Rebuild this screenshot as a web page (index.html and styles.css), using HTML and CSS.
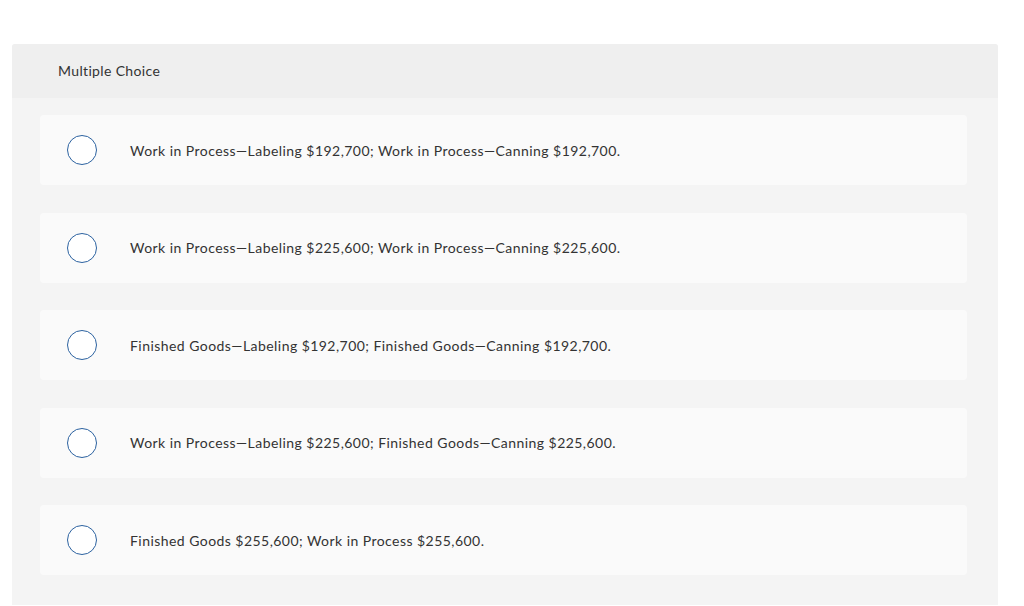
FILE: index.html
```html
<!DOCTYPE html>
<html>
<head>
<meta charset="utf-8">
<link rel="stylesheet" href="styles.css">
</head>
<body>
<div class="page">
  <section class="question">
    <header class="q-head">Multiple Choice</header>
    <div class="q-body">
      <label class="option"><span class="radio"></span><span class="opt-text">Work in Process—Labeling $192,700; Work in Process—Canning $192,700.</span></label>
      <label class="option"><span class="radio"></span><span class="opt-text">Work in Process—Labeling $225,600; Work in Process—Canning $225,600.</span></label>
      <label class="option"><span class="radio"></span><span class="opt-text">Finished Goods—Labeling $192,700; Finished Goods—Canning $192,700.</span></label>
      <label class="option"><span class="radio"></span><span class="opt-text">Work in Process—Labeling $225,600; Finished Goods—Canning $225,600.</span></label>
      <label class="option"><span class="radio"></span><span class="opt-text">Finished Goods $255,600; Work in Process $255,600.</span></label>
    </div>
  </section>
</div>
</body>
</html>
```
FILE: styles.css
```css
html, body {
  margin: 0;
  padding: 0;
  background: #ffffff;
}
body {
  font-family: "Lato", "Noto Sans", sans-serif;
  color: #333333;
}
.page {
  padding: 44px 26px 0 12px;
}
.question {
  width: 986px;
  background: #f4f4f4;
  border-radius: 3px 3px 0 0;
  overflow: hidden;
}
.q-head {
  height: 54px;
  background: #efefef;
  display: flex;
  align-items: center;
  padding: 0 0 2px 46px;
  box-sizing: border-box;
  font-size: 14px;
  letter-spacing: 0.35px;
  color: #333333;
}
.q-body {
  display: flex;
  flex-direction: column;
  gap: 27.5px;
  padding: 17px 31px 30px 28px;
}
.option {
  height: 70px;
  background: #fafafa;
  border-radius: 4px;
  display: flex;
  align-items: center;
  padding-left: 27px;
}
.radio {
  width: 30px;
  height: 30px;
  box-sizing: border-box;
  border: 1.5px solid #2c62a0;
  border-radius: 50%;
  background: #ffffff;
  flex: none;
}
.opt-text {
  margin-left: 33px;
  font-size: 14px;
  letter-spacing: 0.45px;
  color: #333333;
}
```
